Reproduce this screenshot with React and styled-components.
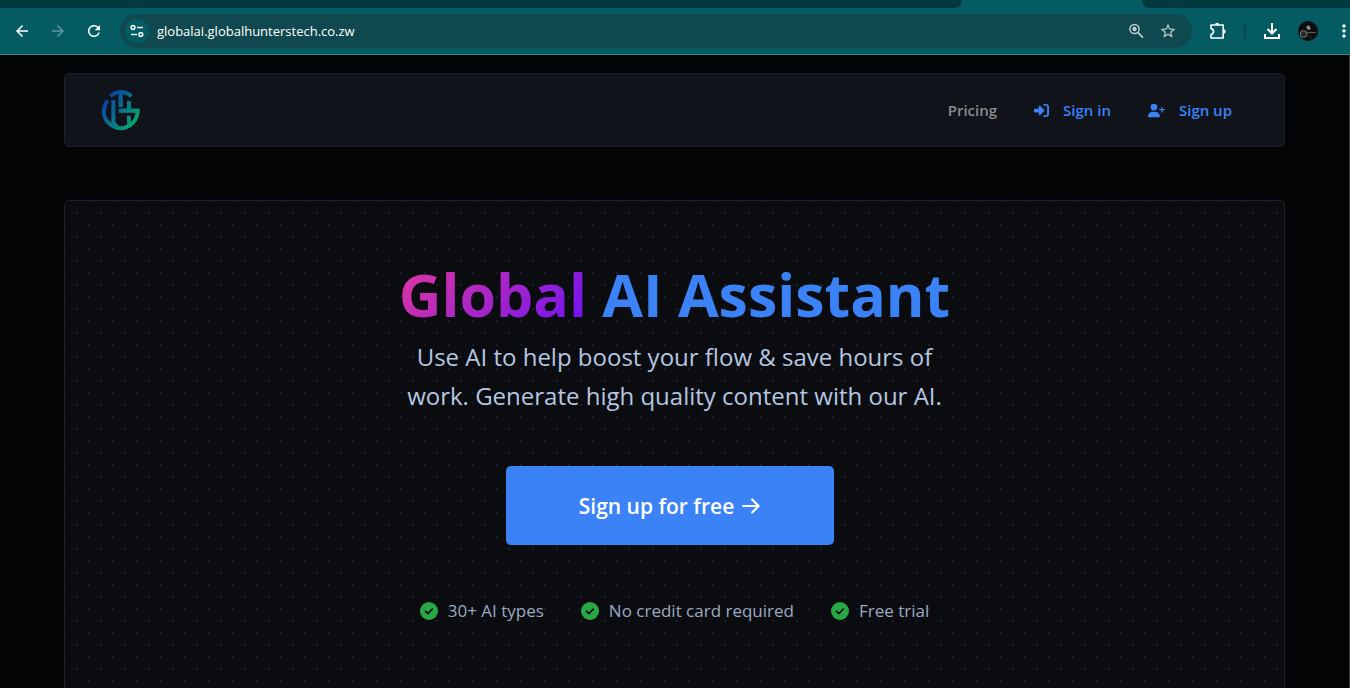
import React from "react";
import styled, { createGlobalStyle } from "styled-components";
import { FaRightToBracket, FaUserPlus } from "react-icons/fa6";
import {
  MdArrowBack,
  MdArrowForward,
  MdRefresh,
  MdStarBorder,
  MdMoreVert,
} from "react-icons/md";

const features = ["30+ AI types", "No credit card required", "Free trial"];

const Logo = () => (
  <svg width="40" height="42" viewBox="0 0 120 126" fill="none" aria-hidden="true">
    <defs>
      <linearGradient id="brand" gradientUnits="userSpaceOnUse" x1="15" y1="25" x2="105" y2="95">
        <stop offset="0" stopColor="#0a3fa8" />
        <stop offset="0.5" stopColor="#08708f" />
        <stop offset="1" stopColor="#08a36c" />
      </linearGradient>
    </defs>
    <g stroke="url(#brand)" strokeWidth="12">
      <path d="M28 22C46 5 74 5 91 22" />
      <path d="M59 10V54" strokeWidth="13" />
      <path d="M20 34C2 58 5 90 29 107C68 134 108 104 110 66" />
      <path d="M53 65H116" strokeWidth="13" />
      <path d="M37 33V100Q39 108 48 112" />
      <path d="M84 36V66" />
      <path d="M78 86H84V108" strokeWidth="11" />
    </g>
  </svg>
);

const TuneIcon = () => (
  <svg width="14" height="14" viewBox="0 0 14 14" fill="none" stroke="#e6f2f2" strokeWidth="1.6" aria-hidden="true">
    <circle cx="3" cy="3.5" r="1.9" />
    <path d="M7 3.5H13M1 10.5H7" />
    <circle cx="10.8" cy="10.5" r="1.9" />
  </svg>
);

const ZoomIcon = () => (
  <svg width="16" height="16" viewBox="0 0 16 16" fill="none" stroke="#c0cccd" strokeWidth="1.5" aria-hidden="true">
    <circle cx="6.5" cy="6" r="4.6" />
    <circle cx="6.5" cy="6" r="2.2" fill="#c0cccd" stroke="none" />
    <path d="M9.8 9.3L15 14.6" strokeWidth="1.8" />
  </svg>
);

const PuzzleIcon = () => (
  <svg width="18" height="18" viewBox="0 0 18 18" fill="none" aria-hidden="true">
    <path
      d="M2 3H14.2V16H2V12.6Q4.6 12 4.6 9.6Q4.6 7.2 2 6.6Z"
      stroke="#fff"
      strokeWidth="1.6"
      strokeLinejoin="round"
    />
    <path d="M6 3A2.1 2.2 0 0 1 10.2 3ZM14.5 7.2A2.2 2.2 0 0 1 14.5 11.6Z" fill="#fff" />
  </svg>
);

const DownloadIcon = () => (
  <svg width="18" height="18" viewBox="0 0 18 18" fill="none" stroke="#fff" strokeWidth="2" aria-hidden="true">
    <path d="M9 1V11M4.5 7L9 11.5L13.5 7M2 12V16H16V12" />
  </svg>
);

const AvatarPicture = () => (
  <svg width="20" height="20" viewBox="0 0 20 20" aria-hidden="true">
    <circle cx="10" cy="10" r="10" fill="#0c0d0f" />
    <path d="M8 6L11 4L13 8L10 9Z" fill="#8d8f92" />
    <circle cx="5.5" cy="13" r="3.4" fill="#26282a" stroke="#77797b" />
    <path d="M7 11.5H18" stroke="#55585a" strokeWidth="1.3" />
    <path d="M10 14L14 17" stroke="#2f3133" />
  </svg>
);

const CheckIcon = () => (
  <svg width="18" height="18" viewBox="0 0 18 18" fill="none" aria-hidden="true">
    <circle cx="9" cy="9" r="9" fill="#28a745" />
    <path d="M5.5 9.3L8 11.5L12.3 7" stroke="#0b0c10" strokeWidth="1.7" strokeLinecap="round" strokeLinejoin="round" />
  </svg>
);

const ArrowIcon = () => (
  <svg width="18" height="16" viewBox="0 0 18 16" fill="none" stroke="#fff" strokeWidth="2.2" strokeLinecap="round" strokeLinejoin="round" aria-hidden="true">
    <path d="M1.2 8H16.6M10.2 1.5L16.6 8L10.2 14.5" />
  </svg>
);

function BrowserBar() {
  return (
    <header>
      <TabStrip>
        <TabTail />
        <ActiveTab />
        <RestTab />
      </TabStrip>
      <Toolbar>
        <IconButton aria-label="Back">
          <MdArrowBack size={18} />
        </IconButton>
        <IconButton aria-label="Forward" $dim>
          <MdArrowForward size={18} />
        </IconButton>
        <IconButton aria-label="Reload">
          <MdRefresh size={18} />
        </IconButton>
        <AddressBar>
          <SiteButton aria-label="Site information">
            <TuneIcon />
          </SiteButton>
          <Address aria-label="Address" defaultValue="globalai.globalhunterstech.co.zw" />
          <IconButton aria-label="Zoom">
            <ZoomIcon />
          </IconButton>
          <IconButton aria-label="Bookmark" $muted>
            <MdStarBorder size={18} />
          </IconButton>
        </AddressBar>
        <Tools>
          <IconButton aria-label="Extensions">
            <PuzzleIcon />
          </IconButton>
          <Divider />
          <IconButton aria-label="Downloads">
            <DownloadIcon />
          </IconButton>
          <IconButton aria-label="Profile">
            <AvatarPicture />
          </IconButton>
          <IconButton aria-label="Menu">
            <MdMoreVert size={20} />
          </IconButton>
        </Tools>
      </Toolbar>
    </header>
  );
}

export default function App() {
  return (
    <Window>
      <GlobalStyle />
      <BrowserBar />
      <Page>
        <NavBar>
          <LogoLink href="#" aria-label="Home">
            <Logo />
          </LogoLink>
          <NavLinks>
            <NavLink href="#pricing" $plain>
              Pricing
            </NavLink>
            <NavLink href="#sign-in">
              <FaRightToBracket size={15} />
              Sign in
            </NavLink>
            <NavLink href="#sign-up">
              <FaUserPlus size={17} />
              Sign up
            </NavLink>
          </NavLinks>
        </NavBar>
        <Hero>
          <Title>
            <Gradient>Global</Gradient> AI Assistant
          </Title>
          <Lead>
            Use AI to help boost your flow &amp; save hours of
            <br />
            work. Generate high quality content with our AI.
          </Lead>
          <SignUpButton>
            Sign up for free
            <ArrowIcon />
          </SignUpButton>
          <FeatureList>
            {features.map((feature) => (
              <Feature key={feature}>
                <CheckIcon />
                {feature}
              </Feature>
            ))}
          </FeatureList>
        </Hero>
      </Page>
    </Window>
  );
}

const GlobalStyle = createGlobalStyle`
  * {
    box-sizing: border-box;
  }
  body {
    margin: 0;
    background: #030406;
    font-family: "Open Sans", "Noto Sans", sans-serif;
  }
  button,
  input {
    font-family: inherit;
    border: 0;
    padding: 0;
  }
`;

const Window = styled.div`
  min-height: 100vh;
  display: flex;
  flex-direction: column;
`;

const TabStrip = styled.div`
  display: flex;
  height: 8px;
  background: #045c62;
`;

const TabTail = styled.div`
  flex: 962;
  background: #02393f;
  border-bottom-right-radius: 8px;
`;

const ActiveTab = styled.div`
  flex: 180;
`;

const RestTab = styled.div`
  flex: 208;
  background: #02393f;
  border-bottom-left-radius: 8px;
`;

const Toolbar = styled.div`
  display: flex;
  align-items: center;
  height: 47px;
  padding-left: 6px;
  gap: 4px;
  overflow: hidden;
  background: #045c62;
  border-bottom: 1px solid #3b8a8e;
`;

const IconButton = styled.button`
  display: flex;
  flex-shrink: 0;
  align-items: center;
  justify-content: center;
  width: 32px;
  height: 32px;
  background: none;
  color: ${({ $dim, $muted }) => ($dim ? "#5f999d" : $muted ? "#c0cccd" : "#fff")};
`;

const AddressBar = styled.div`
  flex: 1;
  display: flex;
  align-items: center;
  height: 34px;
  margin-left: 6px;
  padding: 0 8px 0 5px;
  border-radius: 17px;
  background: #0f484e;
`;

const SiteButton = styled.button`
  display: flex;
  align-items: center;
  justify-content: center;
  width: 24px;
  height: 24px;
  border-radius: 50%;
  background: #045c62;
`;

const Address = styled.input`
  flex: 1;
  min-width: 0;
  margin-left: 8px;
  background: none;
  color: #fff;
  font-size: 13px;
  outline: none;
`;

const Tools = styled.div`
  display: flex;
  align-items: center;
  gap: 4px;
  margin: 0 -10px 0 6px;
`;

const Divider = styled.span`
  width: 2px;
  height: 16px;
  margin: 0 6px;
  background: #0b444b;
`;

const Page = styled.main`
  flex: 1;
  display: flex;
  flex-direction: column;
  gap: 53px;
  padding: 18px 64px 0;
  border-right: 1px solid #35373a;
`;

const NavBar = styled.nav`
  display: flex;
  align-items: center;
  justify-content: space-between;
  height: 74px;
  padding: 0 52px 0 36px;
  border: 1px solid #1a2130;
  border-radius: 5px;
  background: #10131a;
`;

const LogoLink = styled.a`
  display: flex;
`;

const NavLinks = styled.div`
  display: flex;
  gap: 37px;
`;

const NavLink = styled.a`
  display: flex;
  align-items: center;
  gap: 14px;
  color: ${({ $plain }) => ($plain ? "#8b8b8b" : "#3b82f6")};
  font-size: 15px;
  font-weight: 600;
  text-decoration: none;
`;

const Hero = styled.section`
  flex: 1;
  display: flex;
  flex-direction: column;
  align-items: center;
  padding: 57px 24px 0;
  border: 1px solid #1a2130;
  border-bottom: 0;
  border-radius: 5px 5px 0 0;
  background-color: #0b0c10;
  background-image: radial-gradient(circle, #1d4a94, transparent 1px),
    radial-gradient(circle, #4a5068, transparent 1px);
  background-size: 24px 24px;
  background-position: -12px -12px, 0 0;
`;

const Title = styled.h1`
  margin: 0;
  color: #3b82f6;
  font-size: 59px;
  font-weight: 700;
  line-height: 72px;
`;

const Gradient = styled.span`
  background: linear-gradient(135deg, #e6399b, #6a11f5);
  background-clip: text;
  color: transparent;
`;

const Lead = styled.p`
  margin: 7px 0 0;
  color: #b4c6e0;
  font-size: 24px;
  line-height: 39px;
  text-align: center;
`;

const SignUpButton = styled.button`
  display: flex;
  align-items: center;
  justify-content: center;
  gap: 8px;
  width: 328px;
  height: 79px;
  margin: 51px 10px 0 0;
  border-radius: 5px;
  background: #3b82f6;
  color: #fff;
  font-size: 21px;
  font-weight: 600;
`;

const FeatureList = styled.ul`
  display: flex;
  gap: 37px;
  margin: 54px 0 0;
  padding: 0;
  list-style: none;
`;

const Feature = styled.li`
  display: flex;
  align-items: center;
  gap: 10px;
  color: #9ba9c0;
  font-size: 17px;
  line-height: 24px;
`;
